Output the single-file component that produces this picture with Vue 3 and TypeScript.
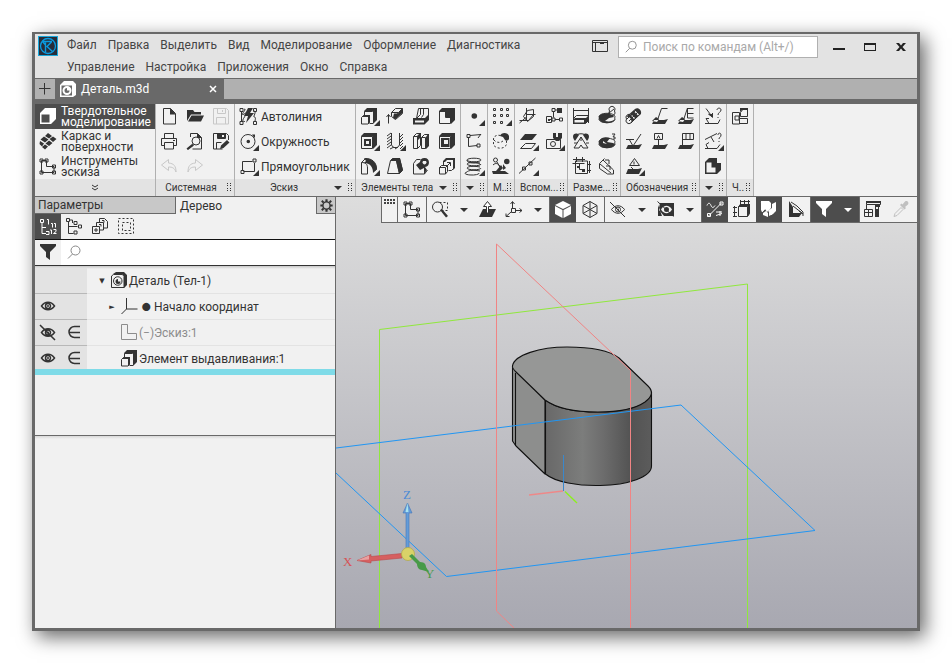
<script setup lang="ts">
import { ref } from 'vue'

interface Glyph {
  /** stroked outline */
  s?: string
  /** solid shapes, even-odd */
  f?: string
  /** light shapes painted above the solid ones */
  w?: string
  /** dashed outline */
  d?: string
}

interface Tool {
  icon: string
  label: string
  more?: boolean
  disabled?: boolean
}

interface ToolGroup {
  title: string
  cols: number
  arrow?: boolean
  tools: Tool[]
}

const glyphs: Record<string, Glyph> = {
  newdoc: { s: 'M7.5 4.5h7l5 5v10.500h-12z', f: 'M14 4v6.500h6z' },
  open: { f: 'M5 17V6h6l1.500 2H19v2.500H9z M9.500 11.500H22L19 17.500H6z' },
  save: { s: 'M5.500 4.500h13l2 2v13.500h-15z M9.500 4.500v5h8v-5 M14.500 6v2 M8.500 20v-6.500h9V20' },
  saveas: { s: 'M20.500 11V6.500l-2-2h-13V20h9 M9.500 4.500v5h8v-5 M8.500 20v-6.500h5', f: 'M9 5h8v4H9z M14 6v2h2V6z M12 20l1-3.500 6-5.500 2.500 2.500-6 5.500z' },
  print: { s: 'M8.500 9V4.500h9V9 M8.500 16.500h-3v-7h15v7h-3 M8.500 13.500h9v6.500h-9z M17 11.500h2' },
  preview: { s: 'M8.500 8V4.500h7l4 4v11.500h-9 M10 12a4 4 0 1 0 8 0 4 4 0 1 0-8 0 M11.500 15l-6 5', f: 'M15 4v5h5z M10 15l2 1.500-6 4.500-1.500-1.500z' },
  undo: { s: 'M12.500 5.500l-7 5.500 7 5.500v-3.500c4 0 6 1 7.500 5 0-6-2-8.500-7.500-9z' },
  redo: { s: 'M13.500 5.500l7 5.500-7 5.500v-3.500c-4 0-6 1-7.500 5 0-6 2-8.500 7.500-9z' },
  solid: { w: 'M5 9l5-5h11v11l-5 5H5z M6.500 10.500v8h8v-8z' },
  surface: { f: 'M13 4l4 3-3 2.500-4-2.500z M18 7.500l3.500 2.500-3.500 3-3.500-3z M9 7.500l4.500 3-3.500 3-4.500-3z M14 11.500l3.500 2.500-3.500 3-3.500-2.500z M5 12l4 2.500-2 3-2.500-2.500z M10 15.500l3 2-3 3-3-2.500z' },
  sketch: { s: 'M6.500 6.500h5v6h7.500v6H6.500z M5 5h3v3H5z M10 5h3v3h-3z M17.500 11h3v3h-3z M17.500 17h3v3h-3z M5 17h3v3H5z' },
  auto: { s: 'M6.500 7.500v10 M9 5.500c4-2-4 6-1 5s6-5 3 0-5 7-1 7 M19 7c3 0-1 6 0 6s2 0 1 4 M5 4.500h3v3H5z M5 17.500h3v3H5z M18.500 4.500h3v3h-3z M18.500 17.500h3v3h-3z', f: 'M13 4h5l-3 5h4l-8 10 2-7h-4z' },
  circle: { s: 'M6 12.500a7 7 0 1 0 14 0 7 7 0 1 0-14 0', f: 'M11.500 12.500a1.800 1.800 0 1 0 3.600 0 1.800 1.800 0 1 0-3.600 0 M17 5.500h3v3h-1z' },
  rect: { s: 'M7.500 16V7.500h10 M19.500 9v8.500h-11 M18 5h3v3h-3z M6 16.500h3v3H6z' },
  extrude: { f: 'M8 7l3-3h10v12l-4 4V7.500H8z M6 13l2-2h6v7l-2 2v-7z', s: 'M8.500 7.500v3.500 M17 19.500h-3.500 M5.500 13.500l2-2h6v7l-1.500 1.500H5.500z M8.500 7.500h8' },
  rotateadd: { s: 'M6.500 19.500v-9 M4.500 13l2-2.500 2 2.500 M9.500 8.500l4-4h7l-4 4z M9.500 8.500v4l4 3 7-6v-5 M16.500 8.500l-3 4', f: 'M12 9.500h4l4-5v5l-7 6-2-2z' },
  press: { s: 'M10.500 4.500h10v11l-4 4h-11v-5h3z M12.500 4.500v6l-4 4h8 M15.500 4.500v6l-2 3', f: 'M5 14h12l4-4v6l-4.500 4.500H5z M7 16.500v2h9v-2z' },
  cutcorner: { f: 'M5 7l3-3h13v12l-4 4v-6h-5V8H5z', s: 'M5.500 7.500v12h11v-6h-5v-6z' },
  hole: { f: 'M5 7l3-3h13v12l-4 4V7.500H5z M8 10h7v7H8z M10 12v3h3v-3z', s: 'M5.500 7.500h11v12h-11z' },
  thread: { s: 'M9.500 4v12l2 2.500h4l2-2.500V4 M5 7l4-3 M5 10l4-3 M5 13l4-3 M5 16l4-3 M5 19l4-3 M8 20l4-2 M18 20l3-3 M18 17l3-3 M18 14l3-3 M18 11l3-3 M18 8l3-3 M13 20l3-2' },
  rib: { s: 'M5.500 7.500l3-3h4v12l-3 3h-4z M5.500 7.500h4v12 M13.500 8.500l3-3h4v11l-3 3h-4z M13.500 8.500h4v11', f: 'M9 7l3-3h1v4l-3 3z M18 8l2-3h1v12l-3 3z' },
  shell: { f: 'M5 7l3-3h13v12l-4 4V7.500H5z M7 9h8.500v9H7z M10 11v4h4v-4z', s: 'M5.500 7.500h11v12h-11z' },
  fillet: { s: 'M5.500 8.500V20h6V14c0-4-2-5.500-6-5.500l4-4c6 0 11 3 11 11l-3 2', f: 'M8 4c8 0 13 5 13 11l-4 4c0-6-3-10-9-10l2-2z' },
  draft: { s: 'M5.500 19.500l3-13 2-2h7l3 12-3 3z M8.500 6.500h6l3 13', f: 'M9 6l2-2h7l3 12-4 4-3-13z' },
  copyball: { s: 'M5.500 9.500l3-4h4 M5.500 9.500V20h11V14 M16.500 20l3-4', f: 'M12 8a4.500 4.500 0 1 1 5 5l2 3-3 4v-6l-4 2-4-5z M15 7a2 2 0 1 0 3 0z' },
  scale: { s: 'M5.500 13.500l2-2h6v6l-2 2.500h-6z M5.500 13.500h6V20 M9.500 11V7.500l3-3h8v9l-3 3h-3 M12 13l4-4 M13 8.500h3.500V12', f: 'M9 7l3-3h9v2h-8l-2 2H9z M19 6h2v8l-2 2z' },
  point: { f: 'M10.500 12a2.800 2.800 0 1 0 5.600 0 2.800 2.800 0 1 0-5.600 0' },
  spline: { s: 'M20 5.500L9 6.500 M7.500 8v9.500l8.500-1 M6 5.500h3v3H6z M16 15h3v3h-3z M20 5l-3 4' },
  spring: { s: 'M6 6a7 1.800 0 1 0 14 0 7 1.800 0 1 0-14 0 M6 6c0 2 2 3 7 3s7 1 6 2 M6 10a7 1.800 0 1 0 14 0 M6 14a7 1.800 0 1 0 14 0 M6 18a7 1.800 0 1 0 12 1 M6 10c1-2 8-2 13-1 M6 14c1-2 8-2 13-1 M6 18c1-2 8-2 13-1' },
  grid: { s: 'M5.500 4.500h2v2h-2z M12.500 4.500h2v2h-2z M18.500 4.500h2v2h-2z M5.500 10.500h2v2h-2z M12.500 10.500h2v2h-2z M18.500 10.500h2v2h-2z M5.500 17.500h2v2h-2z M12.500 17.500h2v2h-2z' },
  mirror: { d: 'M12.500 6.500c-4-1-7 1-7 3.500v6c2 3 7 4 10 2.500l3-2.500v-4 M6 11c2 3 7 3 9 1', f: 'M12 7c1-4 8-4 9 0v3c-1 2-3 2-4 1l-2-3z' },
  explode: { s: 'M5.500 6a2 2 0 1 0 4 0 2 2 0 1 0-4 0 M5 11c3-3 6-1 7 2 M9 8l3 5', f: 'M16 7.500a2.800 2.800 0 1 0 5.600 0 2.800 2.800 0 1 0-5.600 0 M4 17l4 0 5-6 2 3-3 3h5l4 3H5z M15 10l3 4-3 2z' },
  plane: { s: 'M11.500 4v12 M4.500 16.500h9l5-6 M8.500 12.500l4-6 6-1v7l-6 5z M11.500 10.500h9 M11.500 13l-7 6' },
  lcs: { s: 'M12.500 7.500v6 M9 15.500h2 M14 15.500h5 M5.500 12.500h5v6h-5z M18.500 14h3v3h-3z M11 14h3v3h-3z M11 4.500h3v3h-3z M14 6h2', f: 'M16 4h5v5h-5z M7 15h2v2H7z' },
  offset: { f: 'M10 5h12l-5 6H5z', s: 'M10.500 14.500h10l-4 5h-11z' },
  camera: { s: 'M5.500 10.500h14v9h-14z M9.500 15a2.500 2.500 0 1 0 5 0 2.500 2.500 0 1 0-5 0', f: 'M12 4h3v4h2V4h4v5l-3 3h-3l-3-3z' },
  axis: { s: 'M4 19.500L20.500 4 M7.500 13h3v3h-3z M14 8h3v3h-3z' },
  dimlin: { s: 'M5.500 4v16 M20.500 4v15 M5.500 6.500h15 M5.500 14.500l3-3h12 M5.500 19.500h12l3-3', f: 'M5 16l2-2h11l3-3v5l-4 4H5z M6.500 16v2.500H16V16z' },
  dimdia: { s: 'M5.500 14a8 3.500 0 1 0 15 0 8 3.500 0 1 0-15 0 M10 13L20 5 M15.500 7a3 3 0 1 0 5 0 3 3 0 1 0-5 0', f: 'M5 12c3-4 13-3 15 1l-5 1-4 3c5 1 8 0 10-2-1 5-14 6-16 0z' },
  dimang: { s: 'M6 8.500c3-5 11-5 14 0 M13 8l-7 11h5l2-3 2 3h5z M13 8v4 M6 14h3 M18 14h3', f: 'M5 7c1-3 4-3 6-1l-4 6c-1-1-2-3-2-5z M21 7c-1-3-4-3-6-1l4 6c1-1 2-3 2-5z' },
  dimrad: { s: 'M5.500 14a8 3.500 0 1 0 15 0 8 3.500 0 1 0-15 0 M18 5h3l-2 3h2v2h-2', f: 'M5 12c3-5 8-4 11-3l-3 4 6 1 2 1c-1 5-14 6-16 0z M9 12v2l4 1z' },
  dimauto: { s: 'M7.500 7v12.500h12v-12.500z M5 5.500h12 M8.500 3v5 M14.500 3v5 M4.500 9.500h12 M11.500 9.500v6h4 M21.500 7v12 M19 10.500h4 M19 16.500h4', f: 'M9 12h3v2H9z M14 15h3v3h-3z' },
  dimedge: { s: 'M5.500 9.500l5-5 M5.500 9.500v5l8 5.500h6v-4L9 6 M11 6h4v4 M12 12h4v4 M6 10l11 9' },
  threadmark: { s: 'M6 15l9-9 M8 17l9-9 M10 19l9-9 M5.500 15a3 3 0 1 0 5 0 3 3 0 1 0-5 0', f: 'M5 13l9-8c3-2 7 1 6 5l-9 8c0-2-2-6-6-5z M9 11l4 4 1-1-4-4z M13 7.500l4 4 1-1-4-4z' },
  base: { f: 'M5 20l2-4h10l4-1-3 5z M9 13l3 2-2 3-5-1z', s: 'M10.500 16l4-11.500h6' },
  leader: { f: 'M5 20l2-4h10l4-1-3 5z M9 13l3 2-2 3-5-1z', s: 'M10.500 16l4-12v10h6 M14.500 4.500h6 M14.500 9.500h6' },
  rough: { f: 'M5 20l2-4h10l4-1-3 5z', s: 'M8 10l4 7 8-12 M5 10.500h8' },
  datum: { f: 'M5 20l2-4h10l4-1-3 5z', s: 'M7.500 4.500h8v6h-8z M10 9.500l1.500-3 1.500 3 M11.500 11v6' },
  tolerance: { f: 'M5 20l2-4h10l4-1-3 5z', s: 'M9.500 17V4.500h11v6h-11 M13 4.500v6 M17 4.500v6' },
  position: { f: 'M5 20l2-5h10l4-1-3 6z', s: 'M13.500 4.500l5 7h-10z M13 7.500v3 M10 13l3 3' },
  pathq: { s: 'M6 4.500l6 8 M8.500 10l4 3V9 M5 19.500h13l2-4 M9 14.500h-3l3 5 M17 6c0-2.500 4-2.500 4 0s-3 2-3 5 M18 13v1', f: 'M8 10l5 0v4z' },
  planeq: { s: 'M5 10.500l12-6 M11 8l3 5 M5 19.500h12l3-4 M9 13.500l-3 2 2 4 M18 6c0-2.500 3-2.500 3 0s-2 2-2 4 M19 12v1' },
  block: { f: 'M5 8l4-4h8v5h4v7l-4 4H5z M6.500 8.500V18.500h9v-5h-4v-5z' },
  drawing: { s: 'M5.500 8.500h7V20h-7z M8 12h4v4H8z M12.500 14.500h8v5h-8 M13.500 8.500l3-4h4v8h-7z', f: 'M13 4h8v2h-6l-2 2z' },
  part: { f: 'M7 6l3-2h8l3 3v10l-3 3V8l-2-2z M12 11v2.500h2.500a2.500 2.500 0 1 1-2.500-2.500z', s: 'M5.500 8l2-1.500h9l1.500 2v11H5.500z M7.500 13a4.200 4.200 0 1 0 8.500 0 4.200 4.200 0 1 0-8.500 0' },
  parttab: { w: 'M5 8l4-4h9l3 3v11l-3 2H5z M6.500 8.500V18.500H17V8.500z M7.500 13.500a4.500 4.500 0 1 0 9 0 4.500 4.500 0 1 0-9 0 M9.500 13.500a2.500 2.500 0 1 0 5 0h-2.500v-2.500a2.500 2.500 0 0 0-2.500 2.500' },
  treenum: { s: 'M5.500 5.500h3v3h-3z M7 8.500v11h4 M7 13.500h4 M12 5.500h1.500v5 M16 9.500h1.500v4 M19 9.500h1.500v4 M15 16h1.500v4 M18.500 15.500h2.500v2l-2.500 2h3 M11 17.500h3v3h-3' },
  tree: { s: 'M5.500 4.500h3v3h-3z M7.500 8v11.500h5 M7.500 12.500h9 M13 7.500h3v3h-3z M17.500 11h3v3h-3z M13 17h3v3h-3z M8.500 6h3v3' },
  layers: { s: 'M5.500 12.500h7v7h-7z M9.500 12V8.500h7V16H13 M12.500 8V4.500h5l3 3V14H17 M8 15h2v2H8z M12 10.500h2v2 M15 6.500h2v2' },
  dashed: { d: 'M5.500 4.500h15v15h-15z M9.500 8.500h8v8h-8z' },
  funnel: { f: 'M5 4h16v2l-6 6v8l-4-3v-5L5 6z' },
  magnifier: { s: 'M10 10.500a4.500 4.500 0 1 0 9 0 4.500 4.500 0 1 0-9 0 M11.500 14L7 18.500' },
  eye: { s: 'M6.500 12c3.500-5 9.500-5 13 0-3.500 5-9.500 5-13 0z M10.500 12a2.500 2.500 0 1 0 5 0 2.500 2.500 0 1 0-5 0', f: 'M12 12a1 1 0 1 0 2 0 1 1 0 1 0-2 0' },
  eyeoff: { s: 'M6.500 12.500c3.500-5 9.500-5 13 0-3.500 5-9.500 5-13 0z M10.500 12.500a2.500 2.500 0 1 0 5 0 2.500 2.500 0 1 0-5 0 M5 5l15 15', f: 'M12 12.500a1 1 0 1 0 2 0 1 1 0 1 0-2 0' },
  include: { s: 'M19 6.500h-5.500a5.500 5.500 0 0 0 0 11H19 M8 12.500h11' },
  origin: { s: 'M10.500 4v11h11 M10.500 15l-5 5' },
  sketchitem: { s: 'M5.500 4.500h6v9h9v6h-15z' },
  zoomframe: { s: 'M5.500 10a5 5 0 1 0 10 0 5 5 0 1 0-10 0', d: 'M12.500 5.500h8v8h-5', f: 'M13 13l2-1 6 7-2 1.500z' },
  normal: { f: 'M8 12h13l-4 8H4z', s: 'M11.500 16V9.500h-3l4-5 4 5h-3V16z', w: 'M11.500 16V9.500h-3l4-5 4 5h-3V16z' },
  axes: { s: 'M11.500 12V5 M9.500 7l2-2.500 2 2.500 M14 13.500h7 M18.500 11.500l2.500 2-2.500 2 M10 15l-5 4.500 M5 16.500v3h3.500 M10.500 11.500h4v4h-4z' },
  shaded: { w: 'M13 4l8 4-8 4-8-4z M5 9l7.500 4v8L5 17z M21 9l-7.500 4v8l7.500-4z' },
  wire: { s: 'M13 4.500l7 4v8l-7 4-7-4v-8z M6 8.500l7 4 7-4 M13 12.500v8 M13 4.500v8 M6 16.500l7-4 7 4' },
  camview: { f: 'M7 6h14v13H11l-5-6 0-2z M8 12.500c3 5 8 5 11 0-3-5-8-5-11 0z M11 12.500a2.500 2.500 0 1 0 5 0 2.500 2.500 0 1 0-5 0 M5 8v11h4z', s: 'M4.500 4.500l16 15' },
  constraints: { s: 'M6 19.500L19.500 6 M5 8.500c1-3 3-3 4 0s3 2 4 0 M5.500 16.500h3v3h-3z M18 5h3v3h-3z M14 15h6 M14 18.500l6-2 M18 14v5' },
  simplify: { s: 'M9.500 9.500l2-2h9v9l-2 3h-9z M9.500 9.500h9v10 M5.500 9v11 M4 10.500h4 M4 15.500h4 M4 19.500h4 M11.500 3v4 M15.500 3v4 M19.500 3v4 M11 4.500h10', f: 'M11 7h10v9l-2 3V9.500h-9z' },
  section: { w: 'M5 4h8l2 2v5l-4 4-2-3-3 3-1-2z M16 7l4-2v9l-3 3-4 2v-6l3-2z M7 16l3-2 2 2v4l-5-2z', s: 'M5 5l11 13 M6 15l8-9' },
  persp: { f: 'M6 4l4 6v6h9l-3 4H6z', s: 'M10 9l9 7 M8 5l6 4 M14 9l6 6v4 M16 14l4 3' },
  measure: { s: 'M6.500 4.500h14v3h-14z M6.500 7.500V12 M4.500 12.500h8v7h-8z M4.500 15.500h8 M8.500 12v8 M15.500 8v12 M18.500 8v12', f: 'M15 7h5v3h-5z M16 12h3v8h-3z M6 4h15v2H6z' },
  picker: { s: 'M7 19.500l1-3 6-6 2 2-6 6z', f: 'M13 8l1.500-1.500 1 1 2.500-3c2-1.500 4.500 1 3 3l-3 2.500 1 1-1.500 1.500z' },
  gear: { s: 'M8 12.500a5 5 0 1 0 10 0 5 5 0 1 0-10 0', f: 'M11.500 4h3v3.500h-3z M11.500 17.500h3V21h-3z M4.500 11H8v3H4.500z M18 11h3.500v3H18z M5.500 7l2-2L10 7.500l-2 2z M18.500 5l2 2L18 9.500l-2-2z M5.500 18l2 2 2.500-2.500-2-2z M18.500 20l2-2-2.500-2.500-2 2z' },
}

const modes = [
  { icon: 'solid', label: 'Твердотельное моделирование' },
  { icon: 'surface', label: 'Каркас и поверхности' },
  { icon: 'sketch', label: 'Инструменты эскиза' },
]
const activeMode = ref(0)

const groups: ToolGroup[] = [
  {
    title: 'Системная', cols: 3,
    tools: [
      { icon: 'newdoc', label: 'Создать' }, { icon: 'open', label: 'Открыть' }, { icon: 'save', label: 'Сохранить', disabled: true },
      { icon: 'print', label: 'Печать' }, { icon: 'preview', label: 'Просмотр' }, { icon: 'saveas', label: 'Сохранить как' },
      { icon: 'undo', label: 'Отменить', disabled: true }, { icon: 'redo', label: 'Повторить', disabled: true },
    ],
  },
  {
    title: 'Эскиз', cols: 0, arrow: true,
    tools: [
      { icon: 'auto', label: 'Автолиния' }, { icon: 'circle', label: 'Окружность', more: true }, { icon: 'rect', label: 'Прямоугольник', more: true },
    ],
  },
  {
    title: 'Элементы тела', cols: 4, arrow: true,
    tools: [
      { icon: 'extrude', label: 'Элемент выдавливания', more: true }, { icon: 'rotateadd', label: 'Придать толщину' }, { icon: 'press', label: 'Ребро жёсткости' }, { icon: 'cutcorner', label: 'Вырезать' },
      { icon: 'hole', label: 'Отверстие', more: true }, { icon: 'thread', label: 'Резьба', more: true }, { icon: 'rib', label: 'Сечение' }, { icon: 'shell', label: 'Оболочка' },
      { icon: 'fillet', label: 'Скругление', more: true }, { icon: 'draft', label: 'Уклон' }, { icon: 'copyball', label: 'Булева операция' }, { icon: 'scale', label: 'Масштабирование' },
    ],
  },
  {
    title: '', cols: 1, arrow: true,
    tools: [{ icon: 'point', label: 'Точка', more: true }, { icon: 'spline', label: 'Сплайн' }, { icon: 'spring', label: 'Спираль', more: true }],
  },
  {
    title: 'М..', cols: 1,
    tools: [{ icon: 'grid', label: 'Массив по сетке', more: true }, { icon: 'mirror', label: 'Зеркальный массив' }, { icon: 'explode', label: 'Разнести' }],
  },
  {
    title: 'Вспом...', cols: 2,
    tools: [
      { icon: 'plane', label: 'Плоскость' }, { icon: 'lcs', label: 'Система координат' },
      { icon: 'offset', label: 'Смещённая плоскость', more: true }, { icon: 'camera', label: 'Контрольная точка', more: true },
      { icon: 'axis', label: 'Ось', more: true },
    ],
  },
  {
    title: 'Разме...', cols: 2,
    tools: [
      { icon: 'dimlin', label: 'Линейный размер' }, { icon: 'dimdia', label: 'Диаметральный размер' },
      { icon: 'dimang', label: 'Угловой размер' }, { icon: 'dimrad', label: 'Радиальный размер' },
      { icon: 'dimauto', label: 'Авторазмер' }, { icon: 'dimedge', label: 'Размер ребра' },
    ],
  },
  {
    title: 'Обозначения', cols: 3,
    tools: [
      { icon: 'threadmark', label: 'Условное изображение резьбы' }, { icon: 'base', label: 'Линия-выноска' }, { icon: 'leader', label: 'Клеймение' },
      { icon: 'rough', label: 'Шероховатость' }, { icon: 'datum', label: 'База' }, { icon: 'tolerance', label: 'Допуск формы' },
      { icon: 'position', label: 'Позиция', more: true },
    ],
  },
  {
    title: '', cols: 1, arrow: true,
    tools: [{ icon: 'pathq', label: 'Расстояние' }, { icon: 'planeq', label: 'Угол', more: true }, { icon: 'block', label: 'МЦХ модели' }],
  },
  { title: 'Ч..', cols: 1, tools: [{ icon: 'drawing', label: 'Создать чертёж' }] },
]

interface ViewItem {
  icon?: string
  label: string
  on?: boolean
  wide?: boolean
  off?: boolean
}

const viewGroups: ViewItem[][] = [
  [{ icon: 'sketch', label: 'Создать эскиз', wide: true }],
  [
    { icon: 'zoomframe', label: 'Показать рамкой' }, { label: 'Варианты масштаба' },
    { icon: 'normal', label: 'Нормально к' }, { icon: 'axes', label: 'Ориентация' }, { label: 'Варианты ориентации' },
  ],
  [{ icon: 'shaded', label: 'Полутоновое', on: true }, { icon: 'wire', label: 'Каркас', wide: true }],
  [
    { icon: 'eyeoff', label: 'Скрыть объекты' }, { label: 'Варианты скрытия' },
    { icon: 'camview', label: 'Показать объекты' }, { label: 'Варианты показа' },
  ],
  [
    { icon: 'constraints', label: 'Ограничения', on: true }, { icon: 'simplify', label: 'Упрощения', wide: true },
    { icon: 'section', label: 'Сечение модели', on: true }, { icon: 'persp', label: 'Перспектива', wide: true },
  ],
  [{ icon: 'funnel', label: 'Фильтры', on: true }, { label: 'Варианты фильтров', on: true }],
  [{ icon: 'measure', label: 'Стили' }, { icon: 'picker', label: 'Пипетка', wide: true, off: true }],
]

const menu = ['Файл', 'Правка', 'Выделить', 'Вид', 'Моделирование', 'Оформление', 'Диагностика', 'Управление', 'Настройка', 'Приложения', 'Окно', 'Справка']
const treeTools = [
  { icon: 'treenum', label: 'Структура построения', on: true },
  { icon: 'tree', label: 'Дерево связей', on: false },
  { icon: 'layers', label: 'Состав', on: false },
  { icon: 'dashed', label: 'Область', on: false },
]
const rows = [
  { vis: '', inc: false, level: 0, mark: '▼', icon: 'part', prefix: '', text: 'Деталь (Тел-1)', faded: false },
  { vis: 'eye', inc: false, level: 1, mark: '►', icon: 'origin', prefix: '⬤', text: 'Начало координат', faded: false },
  { vis: 'eyeoff', inc: true, level: 1, mark: '', icon: 'sketchitem', prefix: '(−)', text: 'Эскиз:1', faded: true },
  { vis: 'eye', inc: true, level: 1, mark: '', icon: 'extrude', prefix: '', text: 'Элемент выдавливания:1', faded: false },
]
const search = ref('')
const filter = ref('')
</script>

<template>
  <main class="window">
    <header class="head">
      <svg class="logo" viewBox="0 0 20 20" aria-hidden="true">
        <rect x="0.5" y="0.5" width="19" height="19" fill="#272d3a" stroke="#18a8dc" />
        <circle cx="10" cy="10" r="7.5" fill="none" stroke="#0a9be0" stroke-width="1.3" />
        <path d="M7.500 6.500v10M13.500 6L9 10.500l5.500 5M4.500 5.500H14M4.500 5.500L7.500 9" fill="none" stroke="#0a9be0" stroke-width="1.4" />
      </svg>
      <nav class="menu">
        <a v-for="m in menu" :key="m" href="#">{{ m }}</a>
      </nav>
      <button class="layout" type="button" aria-label="Расположение панелей">
        <svg viewBox="0 0 16 12"><path d="M.5.5h15v11H.5z M.5 2.500h15 M3.500 2.500v9 M8 3.500h4" /></svg>
      </button>
      <label class="search">
        <svg viewBox="0 0 26 25"><path :d="glyphs.magnifier.s" /></svg>
        <input v-model="search" type="search" placeholder="Поиск по командам (Alt+/)" aria-label="Поиск по командам">
      </label>
      <div class="winbtns">
        <button type="button" aria-label="Свернуть"><svg viewBox="0 0 12 12"><path d="M0 7h12v2H0z" /></svg></button>
        <button type="button" aria-label="Развернуть"><svg viewBox="0 0 12 12"><path fill-rule="evenodd" d="M0 2h12v8H0z M1 4v5h10V4z" /></svg></button>
        <button type="button" aria-label="Закрыть"><svg viewBox="0 0 12 12"><path d="M1 2h3l2 2.500L8 2h3L7.500 6 11 10H8L6 7.500 4 10H1l3.500-4z" /></svg></button>
      </div>
    </header>

    <div class="tabs">
      <button class="plus" type="button" aria-label="Новая вкладка"><svg viewBox="0 0 12 12"><path d="M5.500 0v11.500M0 5.500h11.500" /></svg></button>
      <div class="tab">
        <svg class="cell" viewBox="0 0 26 25"><path class="w" :d="glyphs.parttab.w" /></svg>
        <span>Деталь.m3d</span>
        <button type="button" aria-label="Закрыть вкладку"><svg viewBox="0 0 8 8"><path d="M1 1l6 6M7 1L1 7" /></svg></button>
      </div>
    </div>

    <div class="ribbon">
      <section class="modes">
        <button v-for="(m, i) in modes" :key="m.icon" type="button" :class="{ on: i === activeMode }" @click="activeMode = i">
          <svg class="cell" viewBox="0 0 26 25">
            <path class="f" :d="glyphs[m.icon].f" /><path class="w" :d="glyphs[m.icon].w" /><path class="s" :d="glyphs[m.icon].s" />
          </svg>
          <span>{{ m.label }}</span>
        </button>
        <button class="expand" type="button" aria-label="Все наборы"><svg viewBox="0 0 8 8"><path d="M1 1l3 2 3-2M1 4l3 2 3-2" /></svg></button>
      </section>
      <section v-for="(g, gi) in groups" :key="gi" class="group">
        <div class="tools" :class="'cols-' + g.cols">
          <button v-for="t in g.tools" :key="t.icon" type="button" :title="t.label" :disabled="t.disabled">
            <svg class="cell" viewBox="0 0 26 25">
              <path class="f" :d="glyphs[t.icon].f" /><path class="s" :d="glyphs[t.icon].s" /><path class="s d" :d="glyphs[t.icon].d" />
              <path v-if="t.more" class="f" d="M24 16v6h-6z" />
            </svg>
            <span v-if="g.cols === 0">{{ t.label }}</span>
          </button>
        </div>
        <footer>
          <span v-if="g.title">{{ g.title }}</span>
          <svg v-if="g.arrow" class="arrow" viewBox="0 0 8 4"><path d="M0 0h8L4 4z" /></svg>
          <svg class="dots" viewBox="0 0 5 9"><path d="M0 0h1v1H0z M3 0h1v1H3z M0 2h1v1H0z M3 2h1v1H3z M0 5h1v1H0z M3 5h1v1H3z M0 7h1v1H0z M3 7h1v1H3z" /></svg>
        </footer>
      </section>
    </div>

    <div class="work">
      <aside class="panel">
        <div class="ptabs">
          <button class="idle" type="button">Параметры</button>
          <button class="current" type="button">Дерево</button>
          <button class="gear" type="button" aria-label="Настройка панели">
            <svg viewBox="4 4 18 17"><path class="f" :d="glyphs.gear.f" /><path class="s bold" :d="glyphs.gear.s" /></svg>
          </button>
        </div>
        <div class="ptools">
          <button v-for="t in treeTools" :key="t.icon" type="button" :title="t.label" :class="{ on: t.on }">
            <svg class="cell" viewBox="0 0 26 25"><path class="f" :d="glyphs[t.icon].f" /><path class="s" :d="glyphs[t.icon].s" /><path class="s d" :d="glyphs[t.icon].d" /></svg>
          </button>
        </div>
        <div class="filter">
          <button type="button" aria-label="Фильтр"><svg class="cell" viewBox="0 0 26 25"><path class="f" :d="glyphs.funnel.f" /></svg></button>
          <label>
            <svg class="cell" viewBox="0 0 26 25"><path class="s" :d="glyphs.magnifier.s" /></svg>
            <input v-model="filter" type="search" aria-label="Поиск в дереве">
          </label>
        </div>
        <div class="tree">
          <ul>
            <li v-for="r in rows" :key="r.text" :class="{ faded: r.faded }">
              <div class="gutter">
                <svg v-if="r.vis" class="cell" viewBox="0 0 26 25"><path class="s thick" :d="glyphs[r.vis].s" /><path class="f" :d="glyphs[r.vis].f" /></svg>
                <svg v-if="r.inc" class="cell inc" viewBox="0 0 26 25"><path class="s thick" :d="glyphs.include.s" /></svg>
              </div>
              <div class="node" :class="'level-' + r.level">
                <span class="mark">{{ r.mark }}</span>
                <svg class="cell" viewBox="0 0 26 25"><path class="f" :d="glyphs[r.icon].f" /><path class="s" :d="glyphs[r.icon].s" /></svg>
                <span v-if="r.prefix" class="prefix" :class="{ dot: !r.faded }">{{ r.prefix }}</span>
                <span>{{ r.text }}</span>
              </div>
            </li>
          </ul>
          <div class="endbar"></div>
        </div>
        <div class="rest"></div>
      </aside>

      <section class="view">
        <svg class="scene" viewBox="336 197 581 431" preserveAspectRatio="xMidYMid slice" role="img" aria-label="Модель детали">
          <defs>
            <linearGradient id="side" x1="545" x2="652" y1="0" y2="0" gradientUnits="userSpaceOnUse">
              <stop offset="0" stop-color="#686868" /><stop offset="0.35" stop-color="#7c7d7c" /><stop offset="0.55" stop-color="#6c6c6c" /><stop offset="0.8" stop-color="#535353" /><stop offset="1" stop-color="#5c5c5c" />
            </linearGradient>
            <linearGradient id="sky" x1="0" x2="0" y1="0" y2="1">
              <stop offset="0" stop-color="#dddddd" /><stop offset="1" stop-color="#a8a8b1" />
            </linearGradient>
          </defs>
          <rect x="336" y="197" width="581" height="431" fill="url(#sky)" />
          <path d="M379.500 628V329.500L747.500 284V628" fill="none" stroke="#90e83c" />
          <g stroke="#111" stroke-width="1.100" stroke-linejoin="round">
            <path d="M512.500 366V441L516 446L545 474V400z" fill="#8d8e8d" />
            <path d="M545.500 400V474C555 482 578 486 600 485.500C628 485 651.500 477 651.500 466V392C650 404 625 412 598 412C575 412 556 408 545.500 400z" fill="url(#side)" />
            <path d="M512.500 366C514 355 540 347 567 347C592 347 610 351 619 358L648 386C653 391 653 396 645 402C635 409 616 412 598 412C575 412 556 408 545 400L516 372Q512 368 512.500 366z" fill="#969796" />
            <path d="M515.500 373V446" fill="none" />
          </g>
          <g fill="none" stroke-width="1">
            <path d="M336 448L681 405L815 530.500L446.500 576.500L336 473" stroke="#2196f3" />
            <path d="M514 628L496.500 611V244L630.500 370.500V628" stroke="#f08484" />
            <path d="M563.500 455V491" stroke="#3a88cc" />
            <path d="M529 495L563 491" stroke="#ee8888" stroke-width="1.400" />
            <path d="M565 491.500L577 503" stroke="#8cf01e" stroke-width="1.400" />
          </g>
          <g class="triad">
            <path d="M406 549v-36h-3l4.500-10 4.500 10h-3v36z" fill="#649cd8" stroke="#4376b8" stroke-width="0.600" />
            <path d="M407.500 503l-2 9h3z" fill="#a9e4ee" />
            <path d="M402 553.500l-31 3v-2l-14 6 14 2.500v-2l31-3z" fill="#d65f60" stroke="#b84a4c" stroke-width="0.600" />
            <path d="M357 560.500l12-5v4z" fill="#e8a0a0" />
            <circle cx="408" cy="554" r="6.500" fill="#d9d268" stroke="#b3aa4c" stroke-width="0.800" />
            <path d="M409 556l3-2 8 8c5 0 6 3 6 5l3 5-7-2c-3 0-5-3-5-6z" fill="#479a48" />
            <text x="403" y="499" fill="#4b8ad6">Z</text>
            <text x="343" y="566" fill="#d65456">X</text>
            <text x="425" y="578" fill="#479a48">Y</text>
          </g>
        </svg>
        <div class="vbar">
          <span class="vgrip"><svg viewBox="0 0 12 5"><path d="M0 0h2v2H0z M3 0h2v2H3z M6 0h2v2H6z M9 0h2v2H9z M0 3h2v2H0z M3 3h2v2H3z M6 3h2v2H6z M9 3h2v2H9z" /></svg></span>
          <div v-for="(g, gi) in viewGroups" :key="gi" class="vgroup">
            <button v-for="v in g" :key="v.label" type="button" :title="v.label" :disabled="v.off" :class="{ on: v.on, wide: v.wide, drop: !v.icon }">
              <svg v-if="v.icon" class="cell" viewBox="0 0 26 25">
                <path class="f" :d="glyphs[v.icon].f" /><path class="w" :d="glyphs[v.icon].w" /><path class="s" :d="glyphs[v.icon].s" /><path class="s d" :d="glyphs[v.icon].d" />
              </svg>
              <svg v-else class="arrow" viewBox="0 0 8 4"><path d="M0 0h8L4 4z" /></svg>
            </button>
          </div>
        </div>
      </section>
    </div>
  </main>
</template>

<style>
body {
  margin: 0;
  background: #fff;
}
</style>

<style scoped>
* {
  box-sizing: border-box;
}
.window {
  display: flex;
  flex-direction: column;
  min-height: calc(100vh - 64px);
  margin: 32px;
  border: 3px solid #696969;
  border-top-width: 2px;
  background: #f1f1f1;
  box-shadow: 5px 6px 18px rgba(0, 0, 0, 0.6);
  color: #333;
  font: 12px/16px Roboto, "Open Sans", sans-serif;
}
button {
  display: flex;
  align-items: center;
  justify-content: center;
  padding: 0;
  border: 0;
  background: none;
  color: inherit;
  font: inherit;
}
input {
  min-width: 0;
  flex: 1;
  padding: 0;
  border: 0;
  outline: 0;
  background: none;
  font: inherit;
}
svg {
  display: block;
  flex: none;
}
.cell {
  width: 26px;
  height: 25px;
}
.f {
  fill: currentColor;
  fill-rule: evenodd;
}
.w {
  fill: #fff;
  fill-rule: evenodd;
}
.s {
  fill: none;
  stroke: currentColor;
}
.thick {
  stroke-width: 1.5;
}
.bold {
  stroke-width: 2;
}
.d {
  stroke-dasharray: 2 2;
}
.arrow {
  width: 8px;
  height: 4px;
  fill: currentColor;
}
.head {
  display: flex;
  align-items: flex-start;
  min-height: 45px;
  padding-left: 3px;
  border-bottom: 1px solid #696969;
  background: #e3e3e3;
}
.logo {
  width: 20px;
  height: 20px;
  margin: 2px 9px 0 0;
}
.menu {
  display: flex;
  flex-wrap: wrap;
  column-gap: 11px;
  max-width: 480px;
  color: #454545;
  line-height: 22px;
}
.menu a {
  color: inherit;
  text-decoration: none;
}
.layout {
  margin: 6px 10px 0 auto;
}
.layout svg {
  width: 16px;
  height: 12px;
  fill: none;
  stroke: #333;
}
.search {
  display: flex;
  align-items: center;
  width: 200px;
  height: 22px;
  margin: 2px 5px 0 0;
  border: 1px solid #b0b0b0;
  background: #fff;
}
.search svg {
  width: 24px;
  height: 22px;
  fill: none;
  stroke: #888;
}
.search input::placeholder {
  color: #a9a9a9;
}
.winbtns {
  display: flex;
  padding-right: 1px;
}
.winbtns button {
  width: 31px;
  height: 25px;
}
.winbtns svg {
  width: 12px;
  height: 12px;
  fill: #222;
}
.tabs {
  display: flex;
  height: 25px;
  border-bottom: 5px solid #696969;
  background: #b0b0b0;
}
.plus {
  width: 20px;
}
.plus svg {
  width: 12px;
  height: 12px;
  fill: none;
  stroke: #333;
}
.tab {
  display: flex;
  align-items: center;
  width: 169px;
  background: #696969;
  color: #fff;
}
.tab span {
  flex: 1;
}
.tab button {
  width: 22px;
}
.tab button svg {
  width: 8px;
  height: 8px;
  fill: none;
  stroke: #fff;
  stroke-width: 1.5;
}
.ribbon {
  display: flex;
  border-bottom: 1px solid #696969;
}
.modes,
.group {
  display: flex;
  flex-direction: column;
  flex: none;
  border-right: 1px solid #b0b0b0;
}
.modes {
  width: 121px;
}
.modes button {
  justify-content: flex-start;
  height: 25px;
  line-height: 11px;
  text-align: left;
}
.modes .on {
  background: #4d4d4d;
  color: #fff;
}
.modes .expand {
  justify-content: center;
  height: 17px;
  background: #e3e3e3;
}
.expand svg {
  width: 8px;
  height: 8px;
  fill: none;
  stroke: #333;
}
.tools {
  display: grid;
  grid-template-rows: repeat(3, 25px);
  align-content: start;
}
.tools button {
  justify-content: flex-start;
}
.tools button:disabled {
  color: #c8c8c8;
}
.cols-0 {
  grid-template-columns: 120px;
}
.cols-1 {
  grid-template-columns: 26px;
}
.cols-2 {
  grid-template-columns: repeat(2, 26px);
}
.cols-3 {
  grid-template-columns: repeat(3, 26px);
}
.cols-4 {
  grid-template-columns: repeat(4, 26px);
}
.group footer {
  display: flex;
  align-items: center;
  justify-content: flex-end;
  gap: 6px;
  height: 17px;
  padding: 0 2px 0 5px;
  background: #e3e3e3;
  font-size: 10px;
}
.group footer span {
  flex: 1;
  width: 0;
  overflow: visible;
  text-align: center;
  white-space: nowrap;
}
.dots {
  width: 5px;
  height: 9px;
  fill: #333;
}
.work {
  display: flex;
  flex: 1;
}
.panel {
  display: flex;
  flex-direction: column;
  flex: none;
  width: 301px;
  border-right: 1px solid #696969;
}
.ptabs {
  display: flex;
  height: 17px;
}
.ptabs button {
  justify-content: flex-start;
  padding-left: 4px;
}
.ptabs .idle {
  width: 141px;
  padding-left: 3px;
  border: solid #696969;
  border-width: 0 1px 1px 0;
  background: #c8c8c8;
}
.ptabs .current {
  flex: 1;
}
.ptabs .gear {
  justify-content: center;
  width: 19px;
  padding: 0;
  border: solid #696969;
  border-width: 0 0 1px 1px;
  background: #c8c8c8;
}
.gear svg {
  width: 13px;
  height: 13px;
}
.ptools {
  display: flex;
  border-bottom: 1px solid #111;
}
.ptools .on {
  background: #4d4d4d;
  color: #fff;
}
.filter {
  display: flex;
  height: 26px;
  border-bottom: 1px solid #333;
  background: #fff;
}
.filter button {
  background: #f1f1f1;
}
.filter label {
  display: flex;
  flex: 1;
  color: #888;
}
.tree {
  min-height: 170px;
  border-bottom: 1px solid #696969;
}
.tree ul {
  margin: 0;
  padding: 2px 0 0;
  background: linear-gradient(#c8c8c8, #f1f1f1 3px);
  list-style: none;
}
.tree li {
  display: flex;
  height: 26px;
}
.gutter {
  display: flex;
  width: 52px;
  border-bottom: 1px solid #b8b8b8;
  background: #e3e3e3;
}
.inc {
  margin-left: auto;
}
.node {
  display: flex;
  align-items: center;
  flex: 1;
  border-bottom: 1px solid #e3e3e3;
}
.node .cell {
  margin-right: -3px;
}
.level-0 {
  padding-left: 9px;
}
.level-1 {
  padding-left: 19px;
}
.faded .node {
  color: #8c8c8c;
}
.mark {
  width: 10px;
  padding-left: 2px;
  font: 7px/16px "DejaVu Sans", sans-serif;
  text-align: center;
}
.prefix {
  width: 15px;
}
.prefix.dot {
  padding-left: 3px;
  font: 8px/16px "DejaVu Sans", sans-serif;
}
.endbar {
  position: relative;
  height: 6px;
  margin-top: -3px;
  background: #7fdbe8;
}
.rest {
  flex: 1;
  background: linear-gradient(#d8d8d8, #f1f1f1 3px);
}
.view {
  display: grid;
  flex: 1;
  min-width: 0;
  background: #c4c4c8;
}
.scene,
.vbar {
  grid-area: 1 / 1;
}
.scene {
  width: 100%;
  height: 100%;
}
.triad text {
  font: 13px "Liberation Serif", serif;
}
.vbar {
  display: flex;
  justify-self: end;
  align-self: start;
  padding-right: 3px;
  border: solid #696969;
  border-width: 0 0 1px 1px;
  background: #f1f1f1;
}
.vgrip {
  width: 16px;
  padding: 2px;
  border-right: 1px solid #696969;
}
.vgrip svg {
  width: 12px;
  height: 5px;
  fill: #444;
}
.vgroup {
  display: flex;
  border-right: 1px solid #696969;
}
.vgroup:last-child {
  border-right: 0;
}
.vgroup button {
  width: 26px;
  height: 25px;
}
.vgroup .wide {
  width: 28px;
}
.vgroup .drop {
  width: 22px;
}
.vgroup .on {
  background: #4d4d4d;
  color: #fff;
}
.vgroup button:disabled {
  color: #c0c0c0;
}
</style>
